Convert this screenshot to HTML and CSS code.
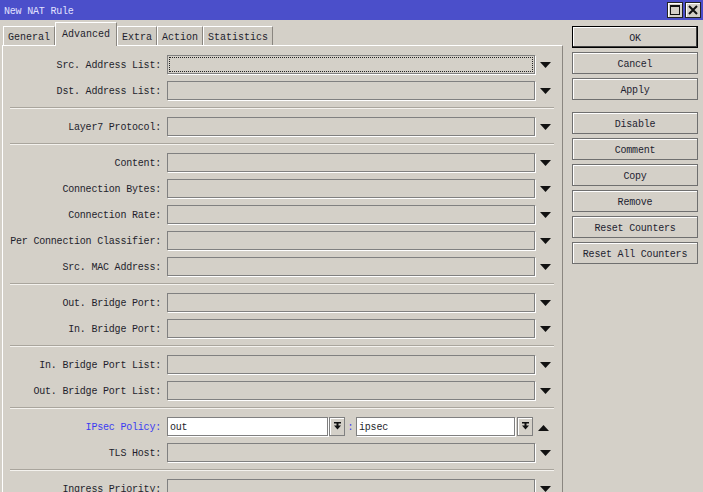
FILE: index.html
```html
<!DOCTYPE html>
<html lang="en">
<head>
    <meta charset="UTF-8">
    <title>New NAT Rule</title>
    <link rel="stylesheet" href="styles.css">
</head>
<body>
    <!-- Title bar -->
    <div class="titlebar">
        <span class="title">New NAT Rule</span>
        <div class="title-btns">
            <span class="tbtn">
                <svg width="10" height="10" viewBox="0 0 10 10"><rect x="0.5" y="0.5" width="9" height="9" fill="none" stroke="#111" stroke-width="1"/><rect x="0" y="0" width="10" height="2" fill="#111"/></svg>
            </span>
            <span class="tbtn">
                <svg width="10" height="10" viewBox="0 0 10 10"><path d="M1 1 L9 9 M9 1 L1 9" stroke="#111" stroke-width="2"/></svg>
            </span>
        </div>
    </div>

    <div class="main">
        <div class="left">
            <!-- Tabs -->
            <div class="tabs">
                <span class="tab">General</span>
                <span class="tab active">Advanced</span>
                <span class="tab">Extra</span>
                <span class="tab">Action</span>
                <span class="tab">Statistics</span>
            </div>

            <!-- Advanced tab -->
            <div class="panel">
                <div class="row"><label>Src. Address List:</label><div class="field focus"></div><span class="arrow down"></span></div>
                <div class="row"><label>Dst. Address List:</label><div class="field"></div><span class="arrow down"></span></div>
                <div class="sep"></div>
                <div class="row"><label>Layer7 Protocol:</label><div class="field"></div><span class="arrow down"></span></div>
                <div class="sep"></div>
                <div class="row"><label>Content:</label><div class="field"></div><span class="arrow down"></span></div>
                <div class="row"><label>Connection Bytes:</label><div class="field"></div><span class="arrow down"></span></div>
                <div class="row"><label>Connection Rate:</label><div class="field"></div><span class="arrow down"></span></div>
                <div class="row"><label>Per Connection Classifier:</label><div class="field"></div><span class="arrow down"></span></div>
                <div class="row"><label>Src. MAC Address:</label><div class="field"></div><span class="arrow down"></span></div>
                <div class="sep"></div>
                <div class="row"><label>Out. Bridge Port:</label><div class="field"></div><span class="arrow down"></span></div>
                <div class="row"><label>In. Bridge Port:</label><div class="field"></div><span class="arrow down"></span></div>
                <div class="sep"></div>
                <div class="row"><label>In. Bridge Port List:</label><div class="field"></div><span class="arrow down"></span></div>
                <div class="row"><label>Out. Bridge Port List:</label><div class="field"></div><span class="arrow down"></span></div>
                <div class="sep"></div>
                <div class="row">
                    <label class="active-label">IPsec Policy:</label>
                    <div class="field white half">out</div>
                    <span class="dbtn"></span>
                    <span class="colon">:</span>
                    <div class="field white half2">ipsec</div>
                    <span class="dbtn"></span>
                    <span class="arrow up"></span>
                </div>
                <div class="row"><label>TLS Host:</label><div class="field"></div><span class="arrow down"></span></div>
                <div class="sep"></div>
                <div class="row"><label>Ingress Priority:</label><div class="field"></div><span class="arrow down"></span></div>
            </div>
        </div>

        <!-- Dialog buttons -->
        <div class="buttons">
            <button class="default">OK</button>
            <button>Cancel</button>
            <button>Apply</button>
            <button class="gap">Disable</button>
            <button>Comment</button>
            <button>Copy</button>
            <button>Remove</button>
            <button>Reset Counters</button>
            <button>Reset All Counters</button>
        </div>
    </div>
</body>
</html>
```

FILE: styles.css
```css
/* General */
body {
    margin: 0;
    height: 492px;
    overflow: hidden;
    background: #d4d0c8;
    font-family: "Liberation Mono", "DejaVu Sans Mono", monospace;
    font-size: 10px;
    letter-spacing: -0.2px;
    color: #1e1e2c;
}

/* Title bar */
.titlebar {
    height: 20px;
    background: #4b4fca;
    color: #e2e2ff;
    display: flex;
    align-items: center;
    justify-content: space-between;
    padding: 0 2px 0 4px;
}

.title {
    padding-top: 3px;
}

.title-btns {
    display: flex;
    gap: 2px;
}

.tbtn {
    width: 16px;
    height: 16px;
    box-sizing: border-box;
    background: #d4d0c8;
    border: 1px solid #222;
    box-shadow: inset 1px 1px #fff;
    display: flex;
    justify-content: center;
    align-items: center;
}

.main {
    display: flex;
}

.left {
    width: 562px;
    padding-top: 2px;
}

/* Tabs */
.tabs {
    display: flex;
    align-items: flex-end;
    height: 23px;
    padding-left: 3px;
}

.tab {
    box-sizing: border-box;
    height: 19px;
    line-height: 18px;
    padding: 2px 4px 0;
    letter-spacing: 0;
    border: 1px solid;
    border-color: #fff #8a8680 transparent #fff;
    border-bottom: none;
    background: #cfcbc3;
}

.tab.active {
    height: 24px;
    line-height: 20px;
    padding: 2px 6px 0;
    margin-bottom: -1px;
    background: #d4d0c8;
    position: relative;
    z-index: 1;
}

/* Tab panel */
.panel {
    margin-left: 2px;
    width: 559px;
    height: 460px;
    padding-top: 5px;
    border-top: 1px solid #fff;
    border-left: 1px solid #fff;
    border-right: 1px solid #8a8680;
}

.row {
    display: flex;
    align-items: center;
    height: 26px;
}

.row label {
    width: 158px;
    margin-right: 6px;
    padding-top: 2px;
    text-align: right;
    white-space: nowrap;
}

.row .active-label {
    color: #3b3bf2;
}

.field {
    box-sizing: border-box;
    width: 368px;
    height: 19px;
    border: 1px solid #808080;
    box-shadow: 1px 1px 0 #fff;
    padding: 1px 2px 0;
    line-height: 17px;
}

.field.focus {
    outline: 1px dotted #222;
    outline-offset: -3px;
}

.field.white {
    background: #fff;
}

.field.half {
    width: 161px;
}

.field.half2 {
    width: 159px;
}

.dbtn {
    box-sizing: border-box;
    width: 16px;
    height: 19px;
    margin-left: 1px;
    border: 1px solid #808080;
    box-shadow: inset 1px 1px #fff;
    background: #d4d0c8 url("data:image/svg+xml,%3Csvg xmlns='http://www.w3.org/2000/svg' width='7' height='8'%3E%3Crect x='0' y='0' width='7' height='1.5' fill='%23111'/%3E%3Crect x='2.5' y='1' width='2' height='3' fill='%23111'/%3E%3Cpolygon points='0,3.5 7,3.5 3.5,7.5' fill='%23111'/%3E%3C/svg%3E") no-repeat center;
}

.half2 + .dbtn {
    margin-left: 2px;
}

.colon {
    width: 11px;
    padding-top: 2px;
    text-align: center;
    color: #3b3bf2;
}

.arrow {
    width: 21px;
    height: 8px;
    margin-top: 2px;
    background-repeat: no-repeat;
    background-position: center;
}

.arrow.down {
    background-image: url("data:image/svg+xml,%3Csvg xmlns='http://www.w3.org/2000/svg' width='11' height='7'%3E%3Cpolygon points='0,0 11,0 5.5,6' fill='%23111'/%3E%3C/svg%3E");
}

.arrow.up {
    background-image: url("data:image/svg+xml,%3Csvg xmlns='http://www.w3.org/2000/svg' width='11' height='7'%3E%3Cpolygon points='0,7 11,7 5.5,1' fill='%23111'/%3E%3C/svg%3E");
}

.sep {
    height: 0;
    margin: 4px 8px 4px 7px;
    border-top: 1px solid #a9a59d;
    border-bottom: 1px solid #f4f2ee;
}

/* Dialog buttons */
.buttons {
    display: flex;
    flex-direction: column;
    gap: 4px;
    width: 126px;
    margin-left: 10px;
    padding-top: 6px;
}

button {
    box-sizing: border-box;
    height: 22px;
    padding: 2px 0 0;
    font-family: inherit;
    font-size: 10px;
    letter-spacing: -0.2px;
    color: #1e1e30;
    background: #d4d0c8;
    border: 1px solid #6f6f6f;
    box-shadow: inset 1px 1px #fff;
}

button.default {
    border-color: #000;
    box-shadow: inset -1px -1px #404040, inset 1px 1px #fff;
}

button.gap {
    margin-top: 8px;
}
```
